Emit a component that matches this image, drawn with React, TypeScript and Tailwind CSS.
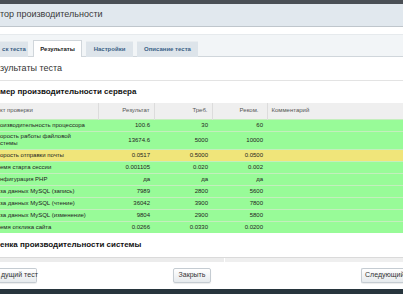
const rows: { name: string; res: string; req: string; rec: string; tall?: boolean; warn?: boolean }[] = [
  { name: 'оизводительность процессора', res: '100.6', req: '30', rec: '60' },
  { name: 'орость работы файловой\nстемы', res: '13674.6', req: '5000', rec: '10000', tall: true },
  { name: 'орость отправки почты', res: '0.0517', req: '0.5000', rec: '0.0500', warn: true },
  { name: 'емя старта сессии', res: '0.001105', req: '0.020', rec: '0.002' },
  { name: 'нфигурация PHP', res: 'да', req: 'да', rec: 'да' },
  { name: 'за данных MySQL (запись)', res: '7989', req: '2800', rec: '5600' },
  { name: 'за данных MySQL (чтение)', res: '36042', req: '3900', rec: '7800' },
  { name: 'за данных MySQL (изменение)', res: '9804', req: '2900', rec: '5800' },
  { name: 'емя отклика сайта', res: '0.0266', req: '0.0330', rec: '0.0200' },
];

const tabs = [
  { label: 'ск теста', w: 'w-[28px]' },
  { label: 'Результаты', w: 'w-[49px]', active: true },
  { label: 'Настройки', w: 'w-[47px]' },
  { label: 'Описание теста', w: 'w-[61px]' },
];

function Button({ children, className }: { children: React.ReactNode; className?: string }) {
  return (
    <button className={`h-[15px] shrink-0 whitespace-nowrap rounded-[2px] border border-[#c5ccd2] bg-gradient-to-b from-white to-[#e6eaed] text-[7px] text-[#333] shadow-[0_1px_1px_rgba(0,0,0,0.08)] ${className ?? ''}`}>
      {children}
    </button>
  );
}

export default function App() {
  return (
    <div className="w-[403px] h-[294px] overflow-hidden bg-white flex flex-col font-['Liberation_Sans',Arial,sans-serif] text-[#333]">
      <div className="h-[4px] bg-[#4a4f55] shrink-0" />
      <div className="h-[23px] shrink-0 bg-[#e1e8ee] border-b border-[#bfc6cc] flex items-center text-[9px] text-[#3a3a3a]">
        тор производительности
      </div>
      <div className="h-[7px] shrink-0" />
      <div className="h-[23px] shrink-0 border-t border-[#e6eaed] border-b border-b-[#d0d6db] bg-[#f2f5f7] flex items-end gap-[4px]">
        {tabs.map((t, i) => (
          <div
            key={t.label}
            className={`${t.w} ${i === 1 ? 'ml-[1px]' : ''} h-[16px] -mb-px flex items-center justify-center text-[6px] font-bold whitespace-nowrap ${
              t.active
                ? 'bg-white border border-b-0 border-[#d0d6db] text-[#222] h-[17px]'
                : 'bg-[#dde4ea] border-t border-[#e9edf0] text-[#3a5f86]'
            }`}
          >
            {t.label}
          </div>
        ))}
      </div>
      <div className="h-[24px] shrink-0 flex items-center text-[9px] border-b border-[#e3e3e3]">зультаты теста</div>
      <div className="h-[22px] shrink-0 flex items-center text-[8px] font-bold text-[#111]">мер производительности сервера</div>
      <table className="w-full table-fixed border-collapse text-[6px] shrink-0">
        <colgroup>
          <col className="w-[98px]" />
          <col className="w-[56px]" />
          <col className="w-[58px]" />
          <col className="w-[55px]" />
          <col />
        </colgroup>
        <thead>
          <tr className="h-[16px] bg-[#efefef] text-[#555]">
            <th className="font-normal text-left border-r border-[#dcdcdc]">кт проверки</th>
            <th className="font-normal text-right pr-[4px] border-r border-[#dcdcdc]">Результат</th>
            <th className="font-normal text-right pr-[4px] border-r border-[#dcdcdc]">Треб.</th>
            <th className="font-normal text-right pr-[8px] border-r border-[#dcdcdc]">Реком.</th>
            <th className="font-normal text-left pl-[4px]">Комментарий</th>
          </tr>
        </thead>
        <tbody className="text-[#222]">
          {rows.map((r) => (
            <tr
              key={r.name}
              className={`${r.tall ? 'h-[18px]' : 'h-[12px]'} ${r.warn ? 'bg-[#f0e57a]' : 'bg-[#98fb98]'} border-t border-[#c4eebd]`}
            >
              <td className="text-left whitespace-pre-line leading-[7px]">{r.name}</td>
              <td className="text-right pr-[4px]">{r.res}</td>
              <td className="text-right pr-[4px]">{r.req}</td>
              <td className="text-right pr-[4px]">{r.rec}</td>
              <td />
            </tr>
          ))}
        </tbody>
      </table>
      <div className="h-[24px] shrink-0 flex items-center text-[8px] font-bold text-[#111]">енка производительности системы</div>
      <div className="h-[5px] shrink-0 flex border-t border-[#dadada]">
        <div className="w-[225px] bg-[#ececec] border-r border-white" />
        <div className="flex-1 bg-[#efefef]" />
      </div>
      <div className="flex-1 flex items-center">
        <Button className="w-[37px] text-left pl-[1px] border-l-0 rounded-l-none">дущий тест</Button>
        <Button className="w-[38px] ml-[136px]">Закрыть</Button>
        <Button className="w-[42px] ml-auto text-left pl-[3px] border-r-0 rounded-r-none">Следующий</Button>
      </div>
      <div className="h-[5px] bg-[#27353d] shrink-0" />
    </div>
  );
}
